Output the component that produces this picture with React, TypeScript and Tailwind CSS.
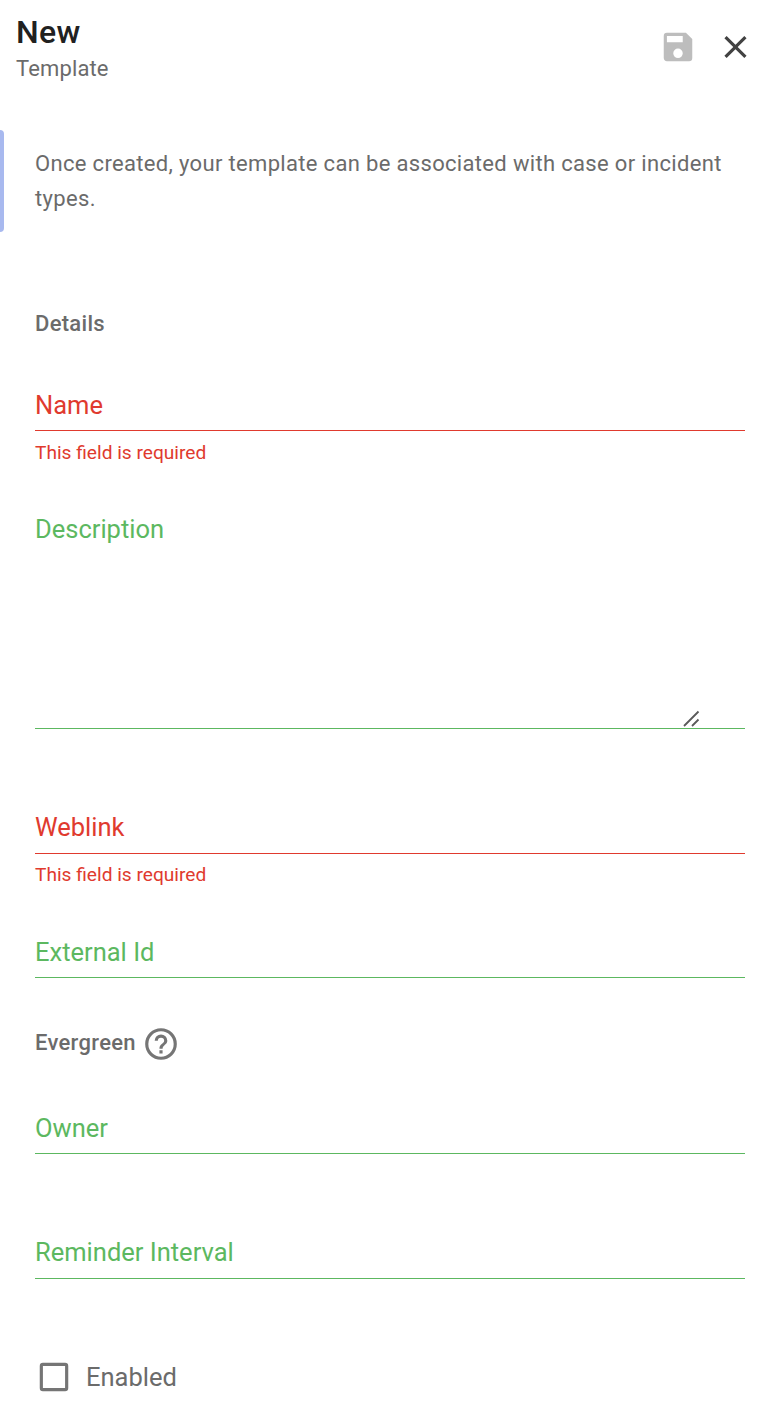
import React from "react";

function Field({ label, className, error }: { label: string; className: string; error?: string }) {
  return (
    <div>
      <div className={`border-b whitespace-nowrap text-[25.5px] leading-[32px] ${className}`}>{label}</div>
      {error && <div className={`text-[19.15px] leading-[24px] text-[#e03a2e] ${error}`}>This field is required</div>}
    </div>
  );
}

export default function App() {
  return (
    <main className="h-[1426px] w-[774px] overflow-hidden bg-white font-['Roboto',sans-serif] text-[#6b6b6b]">
      <header className="flex h-[130px] items-start justify-between pl-4 pr-5">
        <div className="pt-[12px]">
          <h1 className="text-[32px] leading-[40px] font-medium tracking-[0.3px] text-[#212121]">New</h1>
          <p className="mt-[3px] text-[22px] leading-[28px] tracking-[0.14px]">Template</p>
        </div>
        <div className="flex items-center gap-[19px] pt-[28px]">
          <svg className="size-[38px]" viewBox="0 0 24 24" fill="#bdbdbd"><path d="M17 3H5a2 2 0 0 0-2 2v14c0 1.100.9 2 2 2h14a2 2 0 0 0 2-2V7l-4-4zm-5 16a3 3 0 1 1 0-6 3 3 0 0 1 0 6zm3-10H5V5h10v4z" /></svg>
          <svg className="size-[38px]" viewBox="0 0 24 24" fill="#424242"><path transform="translate(0.3 0)" d="M19 6.410 17.590 5 12 10.590 6.410 5 5 6.410 10.590 12 5 17.590 6.410 19 12 13.410 17.590 19 19 17.590 13.410 12z" /></svg>
        </div>
      </header>
      <div className="flex h-[102px]">
        <div className="w-1 shrink-0 rounded-r-[4px] bg-[#a8b9ef]" />
        <p className="ml-[31px] w-[710px] pt-[16px] text-[22px] leading-[35px] tracking-[0.33px]">Once created, your template can be associated with case or incident types.</p>
      </div>
      <section className="flex flex-col pl-[35px] pr-[29px]">
        <h2 className="mt-[78px] text-[22px] leading-[28px] font-medium tracking-[0.3px]">Details</h2>
        <div className="mt-[51px]"><Field label="Name" error="mt-[10px]" className="h-[42px] border-[#e03a2e] text-[#e03a2e]" /></div>
        <div className="mt-[48px] flex h-[216px] flex-col border-b border-[#5cb860] text-[25.5px] leading-[32px] text-[#5cb860]">
          Description
          <svg className="mt-auto mr-[45px] mb-px size-[17px] self-end" viewBox="0 0 17 17" stroke="#5a5a5a" strokeWidth="1.800"><path d="M1 16 15.500 1.500M9 16l6.500-6.500" /></svg>
        </div>
        <div className="mt-[82px]"><Field label="Weblink" error="mt-[9px]" className="h-[43px] border-[#e03a2e] text-[#e03a2e]" /></div>
        <div className="mt-[49px]"><Field label="External Id" className="h-[42px] border-[#5cb860] text-[#5cb860]" /></div>
        <div className="mt-[46px] flex h-[40px] items-center gap-[6px]">
          <h2 className="pb-[2px] text-[22px] leading-[28px] font-medium tracking-[0.3px]">Evergreen</h2>
          <svg className="size-[38px]" viewBox="0 0 24 24" fill="#757575"><path d="M11 18h2v-2h-2v2zm1-16a10 10 0 1 0 0 20 10 10 0 0 0 0-20zm0 18a8 8 0 1 1 0-16 8 8 0 0 1 0 16zm0-14a4 4 0 0 0-4 4h2a2 2 0 1 1 4 0c0 2-3 1.750-3 5h2c0-2.250 3-2.500 3-5a4 4 0 0 0-4-4z" /></svg>
        </div>
        <div className="mt-[48px]"><Field label="Owner" className="h-[42px] border-[#5cb860] text-[#5cb860]" /></div>
        <div className="mt-[82px]"><Field label="Reminder Interval" className="h-[43px] border-[#5cb860] text-[#5cb860]" /></div>
        <label className="mt-[78px] flex items-center gap-[13px] text-[25.5px] leading-[40px]">
          <svg className="size-[38px]" viewBox="0 0 24 24" fill="#757575"><path d="M19 5v14H5V5h14m0-2H5a2 2 0 0 0-2 2v14a2 2 0 0 0 2 2h14a2 2 0 0 0 2-2V5a2 2 0 0 0-2-2z" /></svg>
          Enabled
        </label>
      </section>
    </main>
  );
}
